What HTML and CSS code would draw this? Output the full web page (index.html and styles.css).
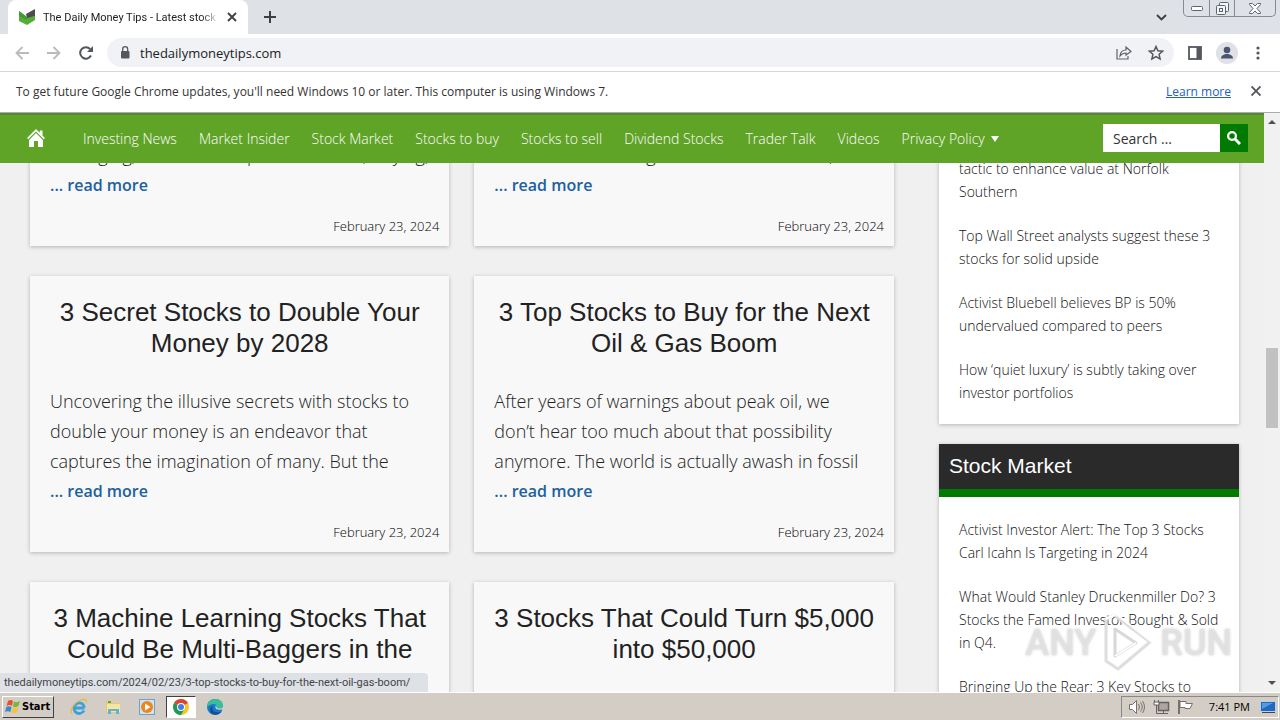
FILE: index.html
```html
<!DOCTYPE html>
<html lang="en">
<head>
  <meta charset="UTF-8" />
  <meta name="viewport" content="width=device-width, initial-scale=1" />
  <title>The Daily Money Tips - Latest stock news</title>
  <link rel="stylesheet" href="styles.css">
</head>
<body>
  <!-- Tab strip -->
  <div class="tab-strip">
    <div class="tab">
      <svg class="favicon" width="17" height="16" viewBox="0 0 17 16"><path d="M0 2l8 6 8-1v4l-8 5-8-4z" fill="#55ad35"/><path d="M7 5l9-5v7l-8 2z" fill="#4b4b50"/><path d="M0 2l8 6v3L0 7z" fill="#46993a"/></svg>
      <span class="tab-title">The Daily Money Tips - Latest stock n</span>
      <button class="icon-btn" aria-label="Close tab"><svg width="10" height="10" viewBox="0 0 10 10"><path d="M1 1l8 8M9 1L1 9" stroke="#3c4043" stroke-width="1.8"/></svg></button>
    </div>
    <button class="icon-btn new-tab" aria-label="New tab"><svg width="12" height="12" viewBox="0 0 12 12"><path d="M6 0v12M0 6h12" stroke="#3c4043" stroke-width="2"/></svg></button>
    <button class="icon-btn tab-search" aria-label="Search tabs"><svg width="11" height="7" viewBox="0 0 11 7"><path d="M1 1l4.500 4.500L10 1" fill="none" stroke="#3c4043" stroke-width="1.900"/></svg></button>
    <div class="window-buttons">
      <button aria-label="Minimize"><svg width="12" height="5" viewBox="0 0 12 5"><rect x=".5" y=".5" width="11" height="4" rx="1" fill="#fff" stroke="#5c6270"/></svg></button>
      <button aria-label="Restore"><svg width="13" height="13" viewBox="0 0 13 13" fill="#f2f4f7" stroke="#5c6270"><rect x="3.500" y=".5" width="9" height="9" rx="1"/><rect x=".5" y="3.500" width="9" height="9" rx="1"/><rect x="3.500" y="6.500" width="3" height="3"/></svg></button>
      <button aria-label="Close"><svg width="12" height="11" viewBox="0 0 12 11"><path d="M.5.5h3L6 3 8.500.5h3v1L8 5.500l3.500 4v1h-3L6 8l-2.500 2.500h-3v-1L4 5.500.5 1.500z" fill="#fff" stroke="#5c6270"/></svg></button>
    </div>
  </div>

  <!-- Address bar -->
  <div class="toolbar">
    <div class="nav-buttons">
      <button class="icon-btn" aria-label="Back"><svg width="14" height="14" viewBox="0 0 14 14"><path d="M14 7H1.500M7.500 1l-6 6 6 6" fill="none" stroke="#b9bbbe" stroke-width="1.800"/></svg></button>
      <button class="icon-btn" aria-label="Forward"><svg width="14" height="14" viewBox="0 0 14 14"><path d="M0 7h12.500M6.500 1l6 6-6 6" fill="none" stroke="#b9bbbe" stroke-width="1.800"/></svg></button>
      <button class="icon-btn" aria-label="Reload"><svg width="14" height="14" viewBox="0 0 14 14"><path d="M12 9.500A5.700 5.700 0 1 1 11.200 3.200" fill="none" stroke="#54575b" stroke-width="2"/><path d="M14 0v6H8z" fill="#54575b"/></svg></button>
    </div>
    <div class="address">
      <svg width="10" height="13" viewBox="0 0 10 13"><rect x="1" y="5" width="8.500" height="7.500" rx="1" fill="#54575b"/><path d="M2.700 5.500V3.200a2.500 2.500 0 0 1 5 0v2.300" fill="none" stroke="#54575b" stroke-width="1.300"/></svg>
      <input type="text" value="thedailymoneytips.com" aria-label="Address" />
      <button class="icon-btn" aria-label="Share"><svg width="16" height="14" viewBox="0 0 16 14" fill="none" stroke="#5f6368" stroke-width="1.200"><path d="M1 3v10h11v-3"/><path d="M4 10c.3-4 2.500-6 6-6V1l5 4.500L10 9V7C7 7 5.500 8 4 10z"/></svg></button>
      <button class="icon-btn" aria-label="Bookmark"><svg width="16" height="16" viewBox="0 0 16 16"><path d="M8 1.500l1.900 4.300 4.700.4-3.500 3.100 1 4.600L8 11.500l-4.100 2.400 1-4.600L1.400 6.200l4.700-.4z" fill="none" stroke="#54575b" stroke-width="1.500"/></svg></button>
    </div>
    <button class="icon-btn" aria-label="Side panel"><svg width="14" height="14" viewBox="0 0 14 14"><rect x="1" y="1" width="12" height="12" fill="#fff" stroke="#54575b" stroke-width="1.800"/><path d="M8.500 1H13v12H8.500z" fill="#54575b"/></svg></button>
    <button class="icon-btn" aria-label="Profile"><svg width="22" height="22" viewBox="0 0 22 22"><circle cx="11" cy="11" r="11" fill="#dfe1e6"/><circle cx="11" cy="8" r="3.300" fill="#4d5470"/><path d="M5 16.500c0-6 12-6 12 0z" fill="#4d5470"/></svg></button>
    <button class="icon-btn menu-btn" aria-label="Menu"><svg width="4" height="14" viewBox="0 0 4 14" fill="#54575b"><circle cx="2" cy="2" r="1.600"/><circle cx="2" cy="7" r="1.600"/><circle cx="2" cy="12" r="1.600"/></svg></button>
  </div>

  <div class="infobar">
    <span>To get future Google Chrome updates, you'll need Windows 10 or later. This computer is using Windows 7.</span>
    <a href="#">Learn more</a>
    <button class="icon-btn" aria-label="Dismiss"><svg width="10" height="10" viewBox="0 0 10 10"><path d="M.5.5l9 9M9.500.5l-9 9" stroke="#54575b" stroke-width="1.900"/></svg></button>
  </div>

  <!-- Web page -->
  <div class="viewport">
    <div class="page">
      <nav class="site-nav">
        <a href="#" class="home" aria-label="Home"><svg width="18" height="18" viewBox="0 0 18 18" fill="#fff"><path d="M9 0L0 9l1.200 1.200L9 2.500l7.800 7.700L18 9l-2.500-2.500V1.500h-2.700v2.300z"/><path d="M9 4l-7 7v7h5v-6h4v6h5v-7z"/></svg></a>
        <a href="#">Investing News</a>
        <a href="#">Market Insider</a>
        <a href="#">Stock Market</a>
        <a href="#">Stocks to buy</a>
        <a href="#">Stocks to sell</a>
        <a href="#">Dividend Stocks</a>
        <a href="#">Trader Talk</a>
        <a href="#">Videos</a>
        <a href="#" class="has-menu">Privacy Policy</a>
        <form class="search">
          <input type="text" placeholder="Search …" aria-label="Search" />
          <button type="submit" aria-label="Search"><svg width="14" height="14" viewBox="0 0 14 14" fill="none" stroke="#fff"><circle cx="5" cy="5" r="3.900" stroke-width="2.200"/><path d="M8 8l5 5" stroke-width="3"/></svg></button>
        </form>
      </nav>

      <div class="content">
        <main class="feed">
          <article class="card partial">
            <p class="excerpt">all surging, it has more upside on hand, buying,</p>
            <a href="#" class="read-more">... read more</a>
            <time>February 23, 2024</time>
          </article>
          <article class="card partial">
            <p class="excerpt">and the oil market gets a fresh new boost, as</p>
            <a href="#" class="read-more">... read more</a>
            <time>February 23, 2024</time>
          </article>
          <article class="card">
            <h2>3 Secret Stocks to Double Your<br>Money by 2028</h2>
            <p class="excerpt">Uncovering the illusive secrets with stocks to<br>double your money is an endeavor that<br>captures the imagination of many. But the</p>
            <a href="#" class="read-more">... read more</a>
            <time>February 23, 2024</time>
          </article>
          <article class="card">
            <h2>3 Top Stocks to Buy for the Next<br>Oil &amp; Gas Boom</h2>
            <p class="excerpt">After years of warnings about peak oil, we<br>don’t hear too much about that possibility<br>anymore. The world is actually awash in fossil</p>
            <a href="#" class="read-more">... read more</a>
            <time>February 23, 2024</time>
          </article>
          <article class="card">
            <h2>3 Machine Learning Stocks That<br>Could Be Multi-Baggers in the</h2>
          </article>
          <article class="card">
            <h2>3 Stocks That Could Turn $5,000<br>into $50,000</h2>
          </article>
        </main>

        <aside class="sidebar">
          <section class="widget partial">
            <ul>
              <li><a href="#">tactic to enhance value at Norfolk<br>Southern</a></li>
              <li><a href="#">Top Wall Street analysts suggest these 3<br>stocks for solid upside</a></li>
              <li><a href="#">Activist Bluebell believes BP is 50%<br>undervalued compared to peers</a></li>
              <li><a href="#">How ‘quiet luxury’ is subtly taking over<br>investor portfolios</a></li>
            </ul>
          </section>
          <section class="widget">
            <h3>Stock Market</h3>
            <ul>
              <li><a href="#">Activist Investor Alert: The Top 3 Stocks<br>Carl Icahn Is Targeting in 2024</a></li>
              <li><a href="#">What Would Stanley Druckenmiller Do? 3<br>Stocks the Famed Investor Bought &amp; Sold<br>in Q4.</a></li>
              <li><a href="#">Bringing Up the Rear: 3 Key Stocks to</a></li>
            </ul>
          </section>
        </aside>
      </div>
    </div>

    <div class="scrollbar">
      <svg width="16" height="17" viewBox="0 0 16 17"><path d="M4 11l4-4 4 4z" fill="#505050"/></svg>
      <span class="track-above"></span>
      <span class="thumb"></span>
      <span class="track-below"></span>
      <svg width="16" height="17" viewBox="0 0 16 17"><path d="M4 6h8l-4 4z" fill="#505050"/></svg>
    </div>

    <div class="status">thedailymoneytips.com/2024/02/23/3-top-stocks-to-buy-for-the-next-oil-gas-boom/</div>

    <div class="watermark">
      <span>ANY</span>
      <svg width="56" height="62" viewBox="0 0 56 62" fill="none" stroke-linejoin="round"><path d="M6 49V7l8-4 36 27-32 27z" stroke="#dedede" stroke-width="3"/><path d="M15 44V17l21 14z" stroke="#d8d8d8" stroke-width="3"/><path d="M6 7l10-5 36 28M15 44l21-13" stroke="#fff" stroke-width="2"/></svg>
      <span>RUN</span>
    </div>
  </div>

  <!-- Windows taskbar -->
  <footer class="taskbar">
    <button class="start"><svg width="16" height="15" viewBox="0 0 16 15"><path d="M3 2q3-2 5 0L7 7Q5 5 1.500 7z" fill="#e5532d"/><path d="M9 2.500q3 1.500 6-.5l-1.500 5q-3 2-5.500.500z" fill="#79b53b"/><path d="M1.300 8Q4 6.500 6.600 8L5.300 13Q3 11.500 0 13z" fill="#3b88d0"/><path d="M7.600 8.500q3 1.500 5.700-.5L12 13q-3 2-5.700.5z" fill="#f3c33b"/></svg>Start</button>
    <button class="task" aria-label="Internet Explorer"><svg width="18" height="18" viewBox="0 0 18 18" fill="none"><path d="M14.500 10H4.500M14 12.500A5.300 5.300 0 1 1 14.500 9.500" stroke="#38a2df" stroke-width="2.800"/><path d="M2 15.500C-1 12 5 4 11 2c4-1.500 6-.5 5 3" stroke="#e8ba3c" stroke-width="1.300"/></svg></button>
    <button class="task" aria-label="Explorer"><svg width="18" height="18" viewBox="0 0 18 18"><path d="M2 3h5l1 2h7v10H2z" fill="#e9c968"/><path d="M3 6h13v8H3z" fill="#f7e6a2"/><path d="M4 16v-5h11v5h-3v-3H7v3z" fill="#62b3d8"/><path d="M4 4h3" stroke="#58a94b" stroke-width="2"/></svg></button>
    <button class="task" aria-label="Media Player"><svg width="18" height="18" viewBox="0 0 18 18"><rect x="1.500" y="1.500" width="15" height="15" fill="#cfe4f3" stroke="#67a5ce"/><circle cx="9" cy="9" r="6" fill="#ef851c"/><path d="M7 5.500l5.500 3.500L7 12.500z" fill="#fff"/></svg></button>
    <button class="task active" aria-label="Chrome"><svg width="16" height="16" viewBox="0 0 16 16"><circle cx="8" cy="8" r="8" fill="#f7c720"/><path d="M8 8L1.100 4a8 8 0 0 1 13.800 0z" fill="#dc4437"/><path d="M8 8L1.100 4A8 8 0 0 0 8 16l3.500-6z" fill="#209856"/><circle cx="8" cy="8" r="4" fill="#fff"/><circle cx="8" cy="8" r="3" fill="#3f80e8"/></svg></button>
    <button class="task" aria-label="Edge"><svg width="16" height="16" viewBox="0 0 16 16"><circle cx="8" cy="8" r="8" fill="#1878c8"/><path d="M0 8C0-2 16-3 16 7c0 4-6 4-6 1.500C11 5 5 3 0 8z" fill="#39bd9b"/><path d="M6 7.500c-2 4 2 7.500 8.500 5C12 17 3 17 3 10.500 3 8 5 7 6 7.500z" fill="#164e94"/><path d="M9.500 6c-2 1-2 6 5.500 4.500L16 12l2-3-2-2c0 4-8 3-6.500-1z" fill="#d5cdc6"/></svg></button>
    <div class="tray">
      <svg width="18" height="16" viewBox="0 0 18 16" fill="none" stroke="#77716c"><path d="M1.500 5.500h3l4-4v13l-4-4h-3z" fill="#fff"/><path d="M10.500 5q2 3 0 6M12.500 3.500q3.500 4.500 0 9M14.500 2q4 6 0 12"/></svg>
      <svg width="17" height="16" viewBox="0 0 17 16" fill="none" stroke="#66615d"><rect x="5.500" y="3.500" width="10" height="8" fill="#aaa6a3" stroke-width="1.500"/><path d="M7 14.500h8M3.500 6v8.500H7M1.500 1v4h4V1M10.500 12v2"/><path d="M1 3h5v3H1z" fill="#fff"/></svg>
      <svg width="17" height="16" viewBox="0 0 17 16"><path d="M2 1v14" stroke="#77716c" stroke-width="2"/><path d="M3 2.500h6v2h6.500l-2.500 5H8v-1H3z" fill="#fff" stroke="#77716c"/></svg>
      <span class="clock">7:41 PM</span>
      <svg width="17" height="14" viewBox="0 0 17 14"><rect x=".5" y="1.500" width="15" height="10" fill="#2467bd" stroke="#b8d0ea"/><path d="M2 3h11L2 9z" fill="#559be0"/><path d="M2 12.500h13" stroke="#444"/></svg>
    </div>
  </footer>
</body>
</html>
```
FILE: styles.css
```css
* {
  box-sizing: border-box;
}
body {
  margin: 0;
  height: 100vh;
  display: flex;
  flex-direction: column;
  overflow: hidden;
  font-family: "Open Sans", sans-serif;
  font-size: 12px;
  color: #222;
}
svg {
  display: block;
  flex: none;
}
button,
input {
  font-family: inherit;
}
a {
  color: inherit;
  text-decoration: none;
}
h2,
h3,
p,
ul {
  margin: 0;
  padding: 0;
  font-weight: 400;
}
.icon-btn {
  display: flex;
  flex: none;
  padding: 0;
  border: none;
  background: none;
}

/* browser */
.tab-strip {
  display: flex;
  align-items: center;
  height: 34px;
  padding-left: 8px;
  background: #dee1e6;
  flex: none;
}
.tab {
  display: flex;
  align-items: center;
  align-self: stretch;
  width: 240px;
  padding: 0 11px;
  background: #fff;
  border-radius: 8px 8px 0 0;
}
.tab-title {
  flex: 1;
  margin: 0 8px 0 7px;
  overflow: hidden;
  white-space: nowrap;
  font-family: Roboto, sans-serif;
  font-size: 11px;
  -webkit-mask-image: linear-gradient(to right, #000 90%, transparent);
  mask-image: linear-gradient(to right, #000 90%, transparent);
}
.new-tab {
  margin-left: 16px;
}
.tab-search {
  margin-left: auto;
}
.window-buttons {
  display: flex;
  align-self: flex-start;
  height: 17px;
  margin: 0 4px 0 16px;
  border: 1px solid #858a96;
  border-top: none;
  border-radius: 0 0 5px 5px;
}
.window-buttons button {
  display: flex;
  align-items: center;
  justify-content: center;
  width: 25px;
  padding: 0;
  border: none;
  background: none;
}
.window-buttons button + button {
  border-left: 1px solid #858a96;
}
.window-buttons button:last-child {
  width: 41px;
}
.toolbar {
  display: flex;
  align-items: center;
  gap: 14px;
  height: 38px;
  padding: 0 20px 0 15px;
  border-bottom: 1px solid #d5d7da;
  background: #fff;
  flex: none;
}
.nav-buttons {
  display: flex;
  gap: 18px;
}
.menu-btn {
  margin-left: 4px;
}
.address {
  display: flex;
  flex: 1;
  align-items: center;
  gap: 16px;
  height: 29px;
  padding: 0 10px 0 13px;
  border-radius: 15px;
  background: #f0f2f5;
}
.address input {
  flex: 1;
  min-width: 0;
  margin-left: -6px;
  padding: 0;
  border: none;
  background: none;
  font-size: 13px;
  color: #202124;
}
.infobar {
  display: flex;
  align-items: center;
  height: 41px;
  padding: 0 19px 2px 16px;
  border-bottom: 1px solid #a9aca9;
  background: #fff;
  color: #333;
  flex: none;
}
.infobar a {
  margin: 0 20px 0 auto;
  color: #2460b8;
  text-decoration: underline;
}

/* web page */
.viewport {
  position: relative;
  display: flex;
  flex: 1;
  min-height: 0;
  overflow: hidden;
}
.page {
  flex: 1;
  min-width: 0;
  background: #f0f0f0;
}
.site-nav {
  position: relative;
  z-index: 1;
  display: flex;
  align-items: center;
  gap: 22px;
  height: 50px;
  padding: 0 16px 2px 27px;
  border-top: 2px solid #58873a;
  background: #5fa327;
  color: #fff;
  font-size: 14px;
  font-weight: 300;
  white-space: nowrap;
}
.home {
  margin-right: 16px;
}
.has-menu::after {
  content: "";
  display: inline-block;
  margin-left: 6px;
  border: 4px solid transparent;
  border-top: 6px solid #fff;
  border-bottom: none;
  vertical-align: 2px;
}
.search {
  display: flex;
  height: 28px;
  margin-left: auto;
}
.search input {
  width: 117px;
  padding: 0 10px;
  border: none;
  background: #fff;
  font-size: 14px;
}
.search input::placeholder {
  color: #333;
}
.search button {
  display: flex;
  align-items: center;
  justify-content: center;
  width: 28px;
  padding: 0;
  border: none;
  background: #007a00;
}
.content {
  display: grid;
  grid-template-columns: 1fr 300px;
  gap: 45px;
  align-items: start;
  margin-top: -23px;
  padding: 0 25px 0 30px;
}
.feed {
  display: grid;
  grid-template-columns: 1fr 1fr;
  gap: 30px 25px;
}
.card,
.widget {
  box-shadow: 0 1px 4px rgba(0, 0, 0, 0.25);
}
.card {
  min-height: 276px;
  padding: 21px 10px 10px 20px;
  background: #f8f8f8;
  white-space: nowrap;
}
.card.partial {
  min-height: 0;
  padding-top: 0;
}
.card h2 {
  margin: 0 10px 27px 0;
  font: 26px/31px "Liberation Sans", Arial, sans-serif;
  text-align: center;
}
.excerpt {
  font-size: 18px;
  font-weight: 300;
  line-height: 30px;
}
.read-more {
  display: block;
  margin-bottom: 16px;
  color: #21609e;
  font-size: 16px;
  font-weight: 600;
  line-height: 30px;
}
.card time {
  display: block;
  color: #000;
  font-size: 13px;
  font-weight: 300;
  line-height: 20px;
  text-align: right;
}
.widget {
  margin-bottom: 20px;
  background: #fff;
}
.widget h3 {
  padding: 10px 10px 11px;
  border-bottom: 8px solid #007a00;
  background: #2a2a2a;
  color: #fff;
  font: 21px/24px "Liberation Sans", Arial, sans-serif;
}
.widget ul {
  display: flex;
  flex-direction: column;
  gap: 21px;
  padding: 21px 20px 20px;
  list-style: none;
  color: #111;
  font-size: 14px;
  font-weight: 300;
  line-height: 23px;
  white-space: nowrap;
}
.widget.partial ul {
  padding-top: 17px;
}
.scrollbar {
  display: flex;
  flex-direction: column;
  align-items: center;
  width: 16px;
  background: #f1f1f1;
}
.track-above {
  flex: 218;
}
.thumb {
  width: 12px;
  height: 80px;
  background: #c1c1c1;
}
.track-below {
  flex: 247;
}
.status {
  position: absolute;
  left: 0;
  bottom: 0;
  z-index: 2;
  height: 19px;
  padding: 0 18px 0 4px;
  border-radius: 0 4px 0 0;
  background: #dee1e6;
  color: #444;
  font-family: Roboto, sans-serif;
  font-size: 11px;
  line-height: 19px;
}
.watermark {
  position: absolute;
  right: 48px;
  bottom: 18px;
  z-index: 2;
  display: flex;
  align-items: center;
  gap: 4px;
  color: rgba(228, 228, 228, 0.85);
  font: 500 36px Roboto, sans-serif;
  text-shadow: 0 0 3px #ccc;
}

/* taskbar */
.taskbar {
  display: flex;
  align-items: center;
  gap: 4px;
  height: 28px;
  padding: 2px 1px 2px 2px;
  border-top: 1px solid #fff;
  background: #d4cdc5;
  flex: none;
}
.start {
  display: flex;
  align-items: center;
  gap: 1px;
  height: 22px;
  margin-right: 6px;
  padding: 0 3px 0 2px;
  border: 1px solid;
  border-color: #fff #404040 #404040 #fff;
  background: #d4cdc5;
  color: #000;
  font: 700 11px "DejaVu Sans Condensed", "DejaVu Sans", sans-serif;
}
.task {
  display: flex;
  align-items: center;
  justify-content: center;
  width: 30px;
  height: 22px;
  padding: 0;
  border: none;
  background: none;
}
.task.active {
  border: 1px solid;
  border-color: #404040 #fff #fff #404040;
  background: #fff;
}
.tray {
  display: flex;
  align-items: center;
  gap: 7px;
  height: 22px;
  margin-left: auto;
  padding: 0 1px 0 6px;
  border: 1px solid;
  border-color: #888 #fff #fff #888;
  color: #000;
}
.clock {
  margin: 0 3px 0 8px;
  font-size: 11px;
}
```
